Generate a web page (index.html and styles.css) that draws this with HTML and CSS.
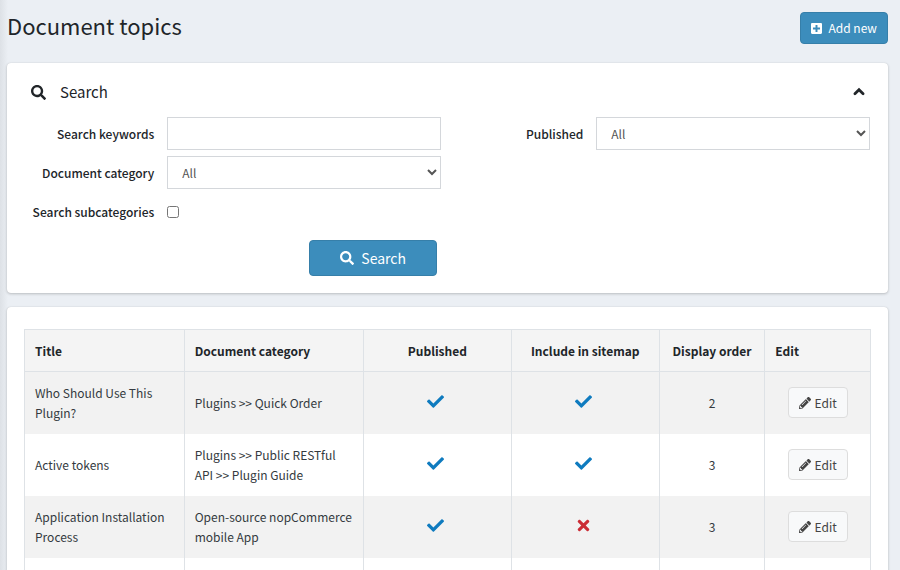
FILE: index.html
```html
<!DOCTYPE html>
<html lang="en">
<head>
    <meta charset="UTF-8">
    <meta name="viewport" content="width=device-width, initial-scale=1.0">
    <title>Document topics</title>
    <link rel="stylesheet" href="styles.css">
</head>
<body>

<!-- Icons -->
<svg class="icon-sprite" aria-hidden="true">
    <symbol id="icon-search" viewBox="0 0 512 512"><path d="M505 442.7L405.3 343c-4.5-4.5-10.6-7-17-7H372c27.6-35.3 44-79.7 44-128C416 93.1 322.9 0 208 0S0 93.1 0 208s93.1 208 208 208c48.3 0 92.7-16.4 128-44v16.3c0 6.4 2.5 12.5 7 17l99.7 99.7c9.4 9.4 24.6 9.4 33.9 0l28.3-28.3c9.4-9.4 9.4-24.6.1-34zM208 336c-70.7 0-128-57.2-128-128 0-70.7 57.2-128 128-128 70.7 0 128 57.2 128 128 0 70.7-57.2 128-128 128z"/></symbol>
    <symbol id="icon-plus" viewBox="0 32 448 448"><path d="M400 32H48C21.5 32 0 53.5 0 80v352c0 26.5 21.5 48 48 48h352c26.5 0 48-21.5 48-48V80c0-26.5-21.5-48-48-48zm-32 252c0 6.6-5.4 12-12 12h-92v92c0 6.6-5.4 12-12 12h-56c-6.6 0-12-5.4-12-12v-92H92c-6.6 0-12-5.4-12-12v-56c0-6.6 5.4-12 12-12h92v-92c0-6.6 5.4-12 12-12h56c6.6 0 12 5.4 12 12v92h92c6.6 0 12 5.4 12 12v56z"/></symbol>
    <symbol id="icon-check" viewBox="0 0 512 512"><path d="M173.898 439.404l-166.4-166.4c-9.997-9.997-9.997-26.206 0-36.204l36.203-36.204c9.997-9.998 26.207-9.998 36.204 0L192 312.69 432.095 72.596c9.997-9.997 26.207-9.997 36.204 0l36.203 36.204c9.997 9.997 9.997 26.206 0 36.204l-294.4 294.401c-9.998 9.997-26.207 9.997-36.204-.001z"/></symbol>
    <symbol id="icon-times" viewBox="-80 0 512 512"><path d="M242.72 256l100.07-100.07c12.28-12.28 12.28-32.19 0-44.48l-22.24-22.24c-12.28-12.28-32.19-12.28-44.48 0L176 189.28 75.93 89.21c-12.28-12.28-32.19-12.28-44.48 0L9.21 111.45c-12.28 12.28-12.28 32.19 0 44.48L109.28 256 9.21 356.07c-12.28 12.28-12.28 32.19 0 44.48l22.24 22.24c12.28 12.28 32.2 12.28 44.48 0L176 322.72l100.07 100.07c12.28 12.28 32.2 12.28 44.48 0l22.24-22.24c12.28-12.28 12.28-32.19 0-44.48L242.72 256z"/></symbol>
    <symbol id="icon-pencil" viewBox="0 0 512 512"><path d="M497.9 142.1l-46.1 46.1c-4.7 4.7-12.3 4.7-17 0l-111-111c-4.7-4.7-4.7-12.3 0-17l46.1-46.1c18.7-18.7 49.1-18.7 67.9 0l60.1 60.1c18.8 18.7 18.8 49.1 0 67.9zM284.2 99.8L21.6 362.4.4 483.9c-2.9 16.4 11.4 30.6 27.8 27.8l121.5-21.3 262.6-262.6c4.7-4.7 4.7-12.3 0-17l-111-111c-4.8-4.7-12.4-4.7-17.1 0zM124.1 339.9c-5.5-5.5-5.5-14.3 0-19.8l154-154c5.5-5.5 14.3-5.5 19.8 0s5.5 14.3 0 19.8l-154 154c-5.5 5.5-14.3 5.5-19.8 0zM88 424h48v36.3l-64.5 11.3-31.1-31.1L51.7 376H88v48z"/></symbol>
    <symbol id="icon-up" viewBox="0 0 12 12"><path d="M2.5 7.5L6 4L9.5 7.5" fill="none" stroke="currentColor" stroke-width="2.4" stroke-linecap="round"/></symbol>
</svg>

<div class="page">
    <div class="page-header">
        <h1>Document topics</h1>
        <button type="button" class="btn btn-add"><svg class="icon"><use href="#icon-plus"/></svg>Add new</button>
    </div>

    <form class="card search-card">
        <div class="card-header">
            <svg class="icon icon-lg"><use href="#icon-search"/></svg>
            <h2>Search</h2>
            <button type="button" class="collapse-btn" aria-label="Collapse"><svg class="icon icon-up"><use href="#icon-up"/></svg></button>
        </div>

        <div class="search-columns">
            <div class="search-column">
                <div class="form-row">
                    <label for="keywords">Search keywords</label>
                    <input type="text" id="keywords" class="form-control">
                </div>
                <div class="form-row">
                    <label for="category">Document category</label>
                    <select id="category" class="form-control"><option>All</option></select>
                </div>
                <div class="form-row">
                    <label for="subcategories">Search subcategories</label>
                    <input type="checkbox" id="subcategories" class="form-check">
                </div>
                <div class="form-actions">
                    <button type="button" class="btn btn-search"><svg class="icon"><use href="#icon-search"/></svg>Search</button>
                </div>
            </div>
            <div class="search-column">
                <div class="form-row">
                    <label for="published">Published</label>
                    <select id="published" class="form-control"><option>All</option></select>
                </div>
            </div>
        </div>
    </form>

    <div class="card table-card">
        <table>
            <colgroup>
                <col class="col-title">
                <col class="col-category">
                <col class="col-flag">
                <col class="col-flag">
                <col class="col-order">
                <col class="col-edit">
            </colgroup>
            <thead>
                <tr>
                    <th>Title</th>
                    <th>Document category</th>
                    <th class="center">Published</th>
                    <th class="center">Include in sitemap</th>
                    <th class="center">Display order</th>
                    <th>Edit</th>
                </tr>
            </thead>
            <tbody>
                <tr>
                    <td>Who Should Use This Plugin?</td>
                    <td>Plugins &gt;&gt; Quick Order</td>
                    <td class="center"><svg class="icon flag yes"><use href="#icon-check"/></svg></td>
                    <td class="center"><svg class="icon flag yes"><use href="#icon-check"/></svg></td>
                    <td class="center">2</td>
                    <td class="center"><button type="button" class="btn btn-edit"><svg class="icon"><use href="#icon-pencil"/></svg>Edit</button></td>
                </tr>
                <tr>
                    <td>Active tokens</td>
                    <td>Plugins &gt;&gt; Public RESTful API &gt;&gt; Plugin Guide</td>
                    <td class="center"><svg class="icon flag yes"><use href="#icon-check"/></svg></td>
                    <td class="center"><svg class="icon flag yes"><use href="#icon-check"/></svg></td>
                    <td class="center">3</td>
                    <td class="center"><button type="button" class="btn btn-edit"><svg class="icon"><use href="#icon-pencil"/></svg>Edit</button></td>
                </tr>
                <tr>
                    <td>Application Installation Process</td>
                    <td>Open-source nopCommerce mobile App</td>
                    <td class="center"><svg class="icon flag yes"><use href="#icon-check"/></svg></td>
                    <td class="center"><svg class="icon flag no"><use href="#icon-times"/></svg></td>
                    <td class="center">3</td>
                    <td class="center"><button type="button" class="btn btn-edit"><svg class="icon"><use href="#icon-pencil"/></svg>Edit</button></td>
                </tr>
                <tr>
                    <td></td>
                    <td></td>
                    <td></td>
                    <td></td>
                    <td></td>
                    <td></td>
                </tr>
            </tbody>
        </table>
    </div>
</div>

</body>
</html>
```

FILE: styles.css
```css
/* General */
* {
    box-sizing: border-box;
    margin: 0;
    padding: 0;
}

body {
    font-family: "Noto Sans CJK SC", "Noto Sans", sans-serif;
    font-size: 12px;
    line-height: 20px;
    color: #343a40;
    background: #ebeff4;
}

button, input, select {
    font: inherit;
}

.icon-sprite {
    position: absolute;
    width: 0;
    height: 0;
}

.icon {
    width: 12px;
    height: 12px;
    fill: currentColor;
    flex: none;
}

.page {
    min-height: 100vh;
    padding: 12px 12px 12px 7px;
    background: linear-gradient(to right, #dde1e6, #ebeff4 8px);
}

/* Page header */
.page-header {
    display: flex;
    justify-content: space-between;
    align-items: flex-start;
    margin-bottom: 19px;
}

h1 {
    font-size: 22px;
    font-weight: 400;
    line-height: 26px;
    color: #212529;
}

h2 {
    font-size: 15px;
    font-weight: 400;
    line-height: 24px;
    color: #212529;
}

/* Buttons */
.btn {
    display: inline-flex;
    align-items: center;
    justify-content: center;
    border: 1px solid #367fa9;
    border-radius: 4px;
    background: #3c8dbc;
    color: #fff;
    cursor: pointer;
}

.btn-add {
    height: 32px;
    padding: 0 10px;
    gap: 6px;
}

.btn-add .icon {
    width: 11px;
    height: 11px;
}

.btn-search {
    height: 36px;
    padding: 0 30px;
    gap: 7px;
    font-size: 14px;
}

.btn-search .icon {
    width: 14px;
    height: 14px;
}

.btn-edit {
    height: 31px;
    padding: 0 10px;
    gap: 4px;
    border-color: #dddddd;
    background: #f8f9fa;
    color: #444444;
}

/* Cards */
.card {
    background: #fff;
    border-radius: 4px;
    box-shadow: 0 0 1px rgba(0, 0, 0, 0.15), 0 1px 3px rgba(0, 0, 0, 0.2);
}

.search-card {
    margin-bottom: 14px;
    padding: 17px 18px 17px 5px;
}

.card-header {
    display: flex;
    align-items: center;
    gap: 14px;
    padding: 0 4px 0 19px;
    margin-bottom: 13px;
    color: #212529;
}

.icon-lg {
    width: 15px;
    height: 15px;
}

.collapse-btn {
    display: flex;
    margin-left: auto;
    border: none;
    background: none;
    color: #212529;
    cursor: pointer;
}

.icon-up {
    width: 14px;
    height: 14px;
}

/* Search form */
.search-columns {
    display: flex;
}

.search-column {
    flex: 1;
}

.form-row {
    display: flex;
    align-items: center;
    height: 33px;
    margin-bottom: 6px;
}

.form-row label {
    flex: 0 0 36.2%;
    padding-right: 13px;
    text-align: right;
    font-weight: 500;
    color: #212529;
}

.form-control {
    flex: 1;
    min-width: 0;
    height: 33px;
    padding: 0 10px;
    border: 1px solid #d4d7db;
    border-radius: 0;
    background: #fff;
    color: #555555;
}

.form-check {
    width: 12px;
    height: 12px;
}

.form-actions {
    display: flex;
    justify-content: flex-end;
    padding: 6px 4px 0 0;
}

/* Table */
.table-card {
    padding: 22px 17px;
}

table {
    width: 100%;
    table-layout: fixed;
    border-collapse: collapse;
    border: 1px solid #dee2e6;
}

.col-title {
    width: 18.9%;
}

.col-category {
    width: 21.2%;
}

.col-flag {
    width: 17.5%;
}

.col-order,
.col-edit {
    width: 12.5%;
}

th, td {
    padding: 10px;
    border-left: 1px solid #dee2e6;
    text-align: left;
    vertical-align: middle;
}

th {
    height: 42px;
    border-bottom: 1px solid #dee2e6;
    background: #f4f4f4;
    color: #212529;
    font-weight: 700;
    white-space: nowrap;
}

td {
    height: 62px;
}

tbody tr:nth-child(odd) {
    background: #f2f2f2;
}

.center {
    text-align: center;
}

.flag {
    width: 17px;
    height: 17px;
    margin-right: 3px;
    vertical-align: -2px;
}

.yes {
    color: #0f7bbf;
}

.no {
    color: #cb2c35;
}
```
